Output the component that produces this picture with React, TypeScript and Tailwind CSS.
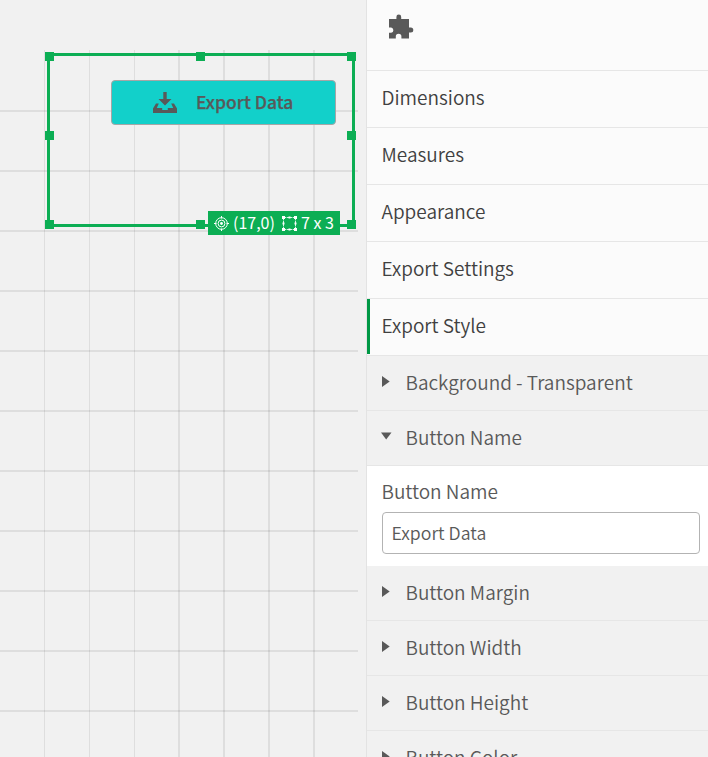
import { useState } from "react";

const columns = [
  { x: 44, w: 1 },
  { x: 89, w: 1 },
  { x: 134, w: 1 },
  { x: 178, w: 2 },
  { x: 223, w: 2 },
  { x: 268, w: 2 },
  { x: 313, w: 2 },
];
const rows = Array.from({ length: 11 }, (_, i) => 110 + i * 60);

function GridLines() {
  return (
    <svg className="absolute inset-0" width="366" height="757" fill="#000" fillOpacity="0.078" shapeRendering="crispEdges">
      {columns.map((c) => (
        <rect key={c.x} x={c.x} y="50" width={c.w} height="707" />
      ))}
      {rows.map((y) => (
        <rect key={y} x="0" y={y} width="358" height="2" />
      ))}
    </svg>
  );
}

function Handle({ place }: { place: string }) {
  return <span className={`absolute size-[9px] bg-[#0cae54] ${place}`} />;
}

function DownloadIcon() {
  return (
    <svg width="24" height="22" viewBox="0 0 24 22" fill="#595959">
      <path d="M10.300 0h3.400v7h4.800L12 13.500 5.500 7h4.800z" />
      <path d="M3 11.500h2.800L3.800 16h5.400v2h5.600v-2h5.400l-2-4.500H21l3 5V21H0v-4.500z" />
    </svg>
  );
}

function TargetIcon() {
  return (
    <svg width="15" height="15" viewBox="0 0 15 15" fill="none" stroke="#fff">
      <circle cx="7.500" cy="7.500" r="5.800" />
      <circle cx="7.500" cy="7.500" r="3.400" />
      <circle cx="7.500" cy="7.500" r="1.400" fill="#fff" stroke="none" />
      <path d="M7.500 0v2.500M7.500 12.500V15M0 7.500h2.500M12.500 7.500H15" />
    </svg>
  );
}

function SizeIcon() {
  return (
    <svg width="15" height="15" viewBox="0 0 15 15" fill="#fff">
      <path d="M1.500 1.500h12v12h-12z" fill="none" stroke="#fff" strokeOpacity="0.85" />
      <path d="M0 0h3v3H0zM12 0h3v3h-3zM0 12h3v3H0zM12 12h3v3h-3zM6.500 0.500h2v2h-2zM6.500 12.500h2v2h-2zM0.500 6.500h2v2h-2zM12.500 6.500h2v2h-2z" />
      <path d="M4 1h1v1H4zM10 1h1v1h-1zM4 13h1v1H4zM10 13h1v1h-1zM1 4h1v1H1zM1 10h1v1H1zM13 4h1v1h-1zM13 10h1v1h-1z" fill="#0cae54" fillOpacity="0.6" />
    </svg>
  );
}

function Canvas() {
  return (
    <main className="relative w-[366px] shrink-0 bg-[#f1f1f1]">
      <GridLines />
      <div className="absolute top-[53px] left-[47px] h-[174px] w-[308px] border-3 border-[#0cae54]">
        <button className="absolute top-[24px] left-[61px] flex h-[45px] w-[225px] items-center rounded-[4px] border border-[#a6a6a6] bg-[#12d0ca] pl-[41px] text-[#595959]">
          <DownloadIcon />
          <span className="ml-[19px] text-[17.500px] font-medium whitespace-nowrap [-webkit-text-stroke:0.25px_#595959]">Export Data</span>
        </button>
        <Handle place="-top-[4px] -left-[5px]" />
        <Handle place="-top-[4px] left-[146px]" />
        <Handle place="-top-[4px] -right-[4px]" />
        <Handle place="top-[75px] -left-[5px]" />
        <Handle place="top-[75px] -right-[4px]" />
        <Handle place="-bottom-[5px] -left-[5px]" />
        <Handle place="-bottom-[5px] left-[146px]" />
        <Handle place="-bottom-[5px] -right-[4px]" />
        <div className="absolute top-[155px] left-[158px] flex h-6 w-[132px] items-center bg-[#0cae54] pl-[6px] text-[16px] whitespace-nowrap text-white">
          <TargetIcon />
          <span className="mb-[2px] ml-1 w-[46px]">(17,0)</span>
          <span className="ml-[3px] flex"><SizeIcon /></span>
          <span className="mb-[2px] ml-1">7 x 3</span>
        </div>
      </div>
    </main>
  );
}

function Section({ label, active = false }: { label: string; active?: boolean }) {
  return (
    <div className="relative h-[57px] shrink-0 border-b border-[#e6e6e6] pl-[14.500px] text-[19px] leading-[51px] font-[350] text-[#404040]">
      {active && <span className="absolute top-0 left-0 h-[55px] w-[3px] bg-[#009845]" />}
      {label}
    </div>
  );
}

function SubSection({ label, open = false }: { label: string; open?: boolean }) {
  return (
    <div className="flex h-[55px] shrink-0 border-b border-[#e6e6e6] bg-[#f1f1f1] pl-[13px] text-[19px] leading-[51px] font-[350] text-[#595959]">
      <svg className="mt-5 mr-[13.500px] shrink-0" width="12" height="12" fill="#595959">
        {open ? <path d="M1 1.500h10.500L6.200 8.500z" /> : <path d="M2 0v11l7.700-5.500z" />}
      </svg>
      {label}
    </div>
  );
}

function PropertiesPanel() {
  const [name, setName] = useState("Export Data");
  return (
    <aside className="flex w-[342px] flex-col overflow-hidden border-l border-[#e3e3e3] bg-[#fbfbfb]">
      <div className="h-[71px] shrink-0 border-b border-[#e6e6e6] pt-[14px] pl-[21px]">
        <svg width="26" height="26" viewBox="0 0 26 26" fill="#595959">
          <path d="M1 5h7.400V3a2.400 2.400 0 0 1 4.800 0v2H21v8.500h1.800a2.500 2.500 0 0 1 0 5H21v6h-7.600v-2a2.800 2.800 0 0 0-5.600 0v2H1v-5.700h2.200a2.700 2.700 0 0 0 0-5.300H1z" />
        </svg>
      </div>
      <Section label="Dimensions" />
      <Section label="Measures" />
      <Section label="Appearance" />
      <Section label="Export Settings" />
      <Section label="Export Style" active />
      <SubSection label="Background - Transparent" />
      <SubSection label="Button Name" open />
      <div className="flex h-[100px] shrink-0 flex-col bg-white pr-2 pl-[15px] font-[350] text-[#595959]">
        <label className="-ml-[0.500px] mt-[10px] mb-[6px] text-[19px] leading-[30px]">Button Name</label>
        <input
          className="h-[42px] rounded-[4px] border border-[#b3b3b3] px-[8.500px] pb-[3px] text-[17.700px] outline-none"
          value={name}
          onChange={(e) => setName(e.target.value)}
        />
      </div>
      <SubSection label="Button Margin" />
      <SubSection label="Button Width" />
      <SubSection label="Button Height" />
      <SubSection label="Button Color" />
    </aside>
  );
}

export default function App() {
  return (
    <div className="flex h-[757px] w-[708px] overflow-hidden font-['Noto_Sans_CJK_SC',sans-serif]">
      <Canvas />
      <PropertiesPanel />
    </div>
  );
}
